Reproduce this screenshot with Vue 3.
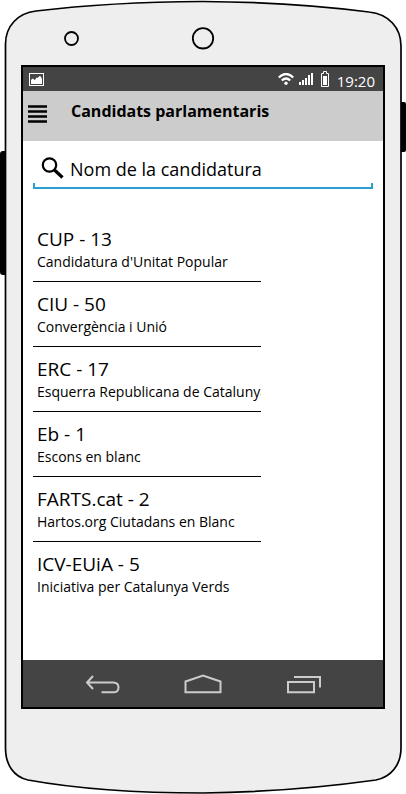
<script setup>
import { ref } from 'vue'

const query = ref('')
const parties = [
  { code: 'CUP', seats: 13, name: "Candidatura d'Unitat Popular" },
  { code: 'CIU', seats: 50, name: 'Convergència i Unió' },
  { code: 'ERC', seats: 17, name: 'Esquerra Republicana de Catalunya' },
  { code: 'Eb', seats: 1, name: 'Escons en blanc' },
  { code: 'FARTS.cat', seats: 2, name: 'Hartos.org Ciutadans en Blanc' },
  { code: 'ICV-EUiA', seats: 5, name: 'Iniciativa per Catalunya Verds' }
]
</script>

<template>
  <div class="phone">
    <svg class="shell" viewBox="0 0 406 794" preserveAspectRatio="none" aria-hidden="true">
      <rect x="0" y="151" width="8" height="124" rx="3" />
      <rect x="398" y="102" width="8" height="50" rx="2" />
      <path
        d="M5.5 44C5.5 26 18 13 36 11Q110 2 203 1.500Q290 2 369 12C389 14 401 28 401 46V748C401 765 391 777 376 780Q290 792 203 793Q100 793 28 780C14 777 5.500 765 5.500 748Z"
        fill="#eee" stroke="#000" stroke-width="1.700"
      />
      <circle cx="71.500" cy="38.500" r="6.500" fill="#eee" stroke="#000" stroke-width="1.800" />
      <circle cx="203" cy="38.300" r="10.200" fill="#eee" stroke="#000" stroke-width="1.800" />
    </svg>

    <main class="screen">
      <div class="status">
        <svg class="picture" width="15" height="13" viewBox="0 0 15 13" aria-hidden="true">
          <rect x=".5" y=".5" width="14" height="12" fill="none" stroke="#fff" />
          <path d="M2 11V7L3 6L4 5.500L5 6.500L6 7L7.500 4.500L8.500 5L9.500 4L11 2.800L12 4L13 6V11Z" fill="#fff" />
        </svg>
        <svg class="wifi" width="16" height="12" viewBox="0 0 16 12" fill="none" stroke="#fff" aria-hidden="true">
          <path d="M.8 4.500Q8-2.500 15.200 4.500" stroke-width="2.300" />
          <path d="M3.800 7.500Q8 3.500 12.200 7.500" stroke-width="2.300" />
          <circle cx="8" cy="10.200" r="1.700" fill="#fff" stroke="none" />
        </svg>
        <svg class="signal" width="14" height="12" viewBox="0 0 14 12" fill="#fff" aria-hidden="true">
          <path d="M0 9h2v3H0zM3 7h2v5H3zM6 5h2v7H6zM9 2h2v10H9zM12 0h2v12h-2z" />
        </svg>
        <svg class="battery" width="8" height="16" viewBox="0 0 8 16" aria-hidden="true">
          <path d="M.5 2.500H2.500V.5H5.500V2.500H7.500V15.500H.5Z" fill="none" stroke="#fff" />
          <rect x="2" y="5" width="4" height="9" fill="#fff" />
        </svg>
        <time class="clock">19:20</time>
      </div>

      <header class="header">
        <button class="menu" type="button" aria-label="Menú">
          <svg width="19" height="19" viewBox="0 0 19 19" aria-hidden="true">
            <path d="M0 .2h19v2.500H0zM0 5.200h19v2.500H0zM0 10.200h19v2.500H0zM0 15.200h19v2.500H0z" />
          </svg>
        </button>
        <h1>Candidats parlamentaris</h1>
      </header>

      <label class="search">
        <svg width="23" height="22" viewBox="0 0 23 22" fill="none" stroke="#000" aria-hidden="true">
          <circle cx="8.500" cy="8" r="6.700" stroke-width="2.200" />
          <path d="M13.500 13L21.500 20.500" stroke-width="3.200" />
        </svg>
        <input v-model="query" type="text" placeholder="Nom de la candidatura" aria-label="Nom de la candidatura" />
      </label>

      <ul class="parties">
        <li v-for="party in parties" :key="party.code">
          <h2>{{ party.code }} - {{ party.seats }}</h2>
          <p>{{ party.name }}</p>
        </li>
      </ul>

      <nav class="keys">
        <button type="button" aria-label="Enrere">
          <svg width="36" height="20" viewBox="0 0 36 20" aria-hidden="true">
            <path d="M9 2L3 8.500L9 15M3 8.500H29Q34.500 8.500 34.500 13.500T29 18.300H17.500" />
          </svg>
        </button>
        <button type="button" aria-label="Inici">
          <svg width="38" height="20" viewBox="0 0 38 20" aria-hidden="true">
            <path d="M1.500 18.300V7.500L19 1.500L36.500 7.500V18.300Z" />
          </svg>
        </button>
        <button type="button" aria-label="Recents">
          <svg width="36" height="20" viewBox="0 0 36 20" aria-hidden="true">
            <path d="M2 8H28V18.300H2ZM8 3H34V13.500" />
          </svg>
        </button>
      </nav>
    </main>
  </div>
</template>

<style>
body {
  margin: 0;
  background: #fff;
}
</style>

<style scoped>
.phone {
  position: relative;
  box-sizing: border-box;
  display: flex;
  min-height: 100vh;
  padding: 65px 21px 85px;
  font-family: "Open Sans", "Noto Sans", sans-serif;
  color: #000;
}

.shell {
  position: absolute;
  inset: 0;
  width: 100%;
  height: 100%;
}

.screen {
  position: relative;
  flex: 1;
  min-width: 0;
  display: flex;
  flex-direction: column;
  border: 2px solid #000;
  background: #fff;
}

.status {
  display: flex;
  align-items: center;
  height: 24px;
  padding: 0 8px 0 6px;
  background: #444;
  color: #fff;
}

.picture {
  margin-right: auto;
}

.signal {
  margin: 0 8px 0 5px;
}

.clock {
  margin-left: 8px;
  padding-top: 4px;
  font-size: 15px;
  line-height: 20px;
}

.header {
  display: flex;
  align-items: flex-start;
  gap: 24px;
  box-sizing: border-box;
  height: 50px;
  padding: 10px 5px;
  background: #ccc;
}

button {
  padding: 0;
  border: 0;
  background: none;
  cursor: pointer;
}

button svg {
  display: block;
}

.menu {
  padding-top: 4px;
}

h1 {
  margin: 0;
  font-size: 16px;
  font-weight: 700;
  line-height: 20px;
}

.search {
  display: flex;
  align-items: center;
  gap: 6px;
  height: 34px;
  margin: 10px 10px 28px;
  padding: 0 8px 4px;
  background:
    linear-gradient(#2a9fd0, #2a9fd0) left bottom / 100% 2px no-repeat,
    linear-gradient(#2a9fd0, #2a9fd0) left bottom / 2px 6px no-repeat,
    linear-gradient(#2a9fd0, #2a9fd0) right bottom / 2px 6px no-repeat;
}

.search input {
  flex: 1;
  min-width: 0;
  padding: 2px 0 0;
  border: 0;
  outline: 0;
  background: none;
  font-family: inherit;
  font-size: 18px;
  line-height: 24px;
  color: #000;
}

.search input::placeholder {
  color: #000;
  opacity: 1;
}

.parties {
  width: 228px;
  margin: 0 10px;
  padding: 0;
  list-style: none;
}

.parties li {
  padding: 10px 0 9px 4px;
  overflow: hidden;
  white-space: nowrap;
}

.parties li:not(:last-child) {
  border-bottom: 1px solid #000;
}

h2 {
  margin: 0;
  font-size: 19px;
  font-weight: 400;
  line-height: 25px;
}

p {
  margin: 0;
  font-size: 14px;
  line-height: 20px;
}

.keys {
  display: flex;
  justify-content: center;
  gap: 64px;
  margin-top: auto;
  height: 47px;
  background: #444;
}

.keys path {
  fill: none;
  stroke: #ccc;
  stroke-width: 2;
}
</style>
